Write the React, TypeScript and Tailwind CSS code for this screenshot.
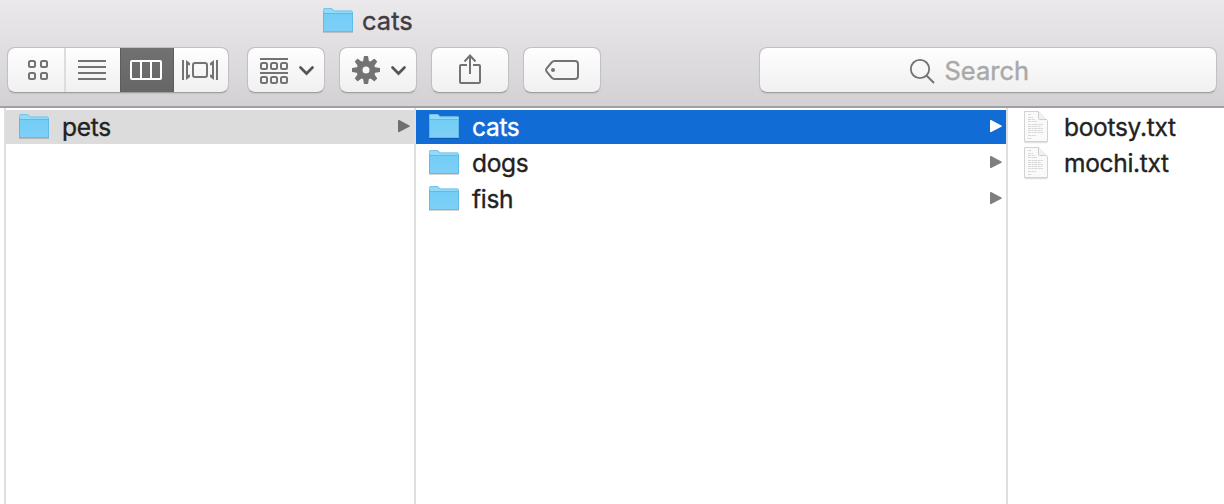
import type { ReactNode } from "react";

const button =
  "h-[46px] shrink-0 overflow-hidden rounded-[8px] border border-[#c2c0c2] border-b-[#a09fa0] bg-linear-to-b from-[#fefefe] to-[#f0f0f0] bg-clip-padding shadow-[0_1px_1px_rgba(0,0,0,0.08)]";

function Folder({ className = "" }: { className?: string }) {
  return (
    <svg className={`h-[28px] w-[32px] shrink-0 ${className}`} viewBox="0 0 32 28">
      <defs>
        <linearGradient id="folder" x1="0" y1="0" x2="0" y2="1">
          <stop offset="0" stopColor="#72cdf6" />
          <stop offset="1" stopColor="#7fd0f7" />
        </linearGradient>
      </defs>
      <path d="M1 26H31V27H1z" fill="#000" opacity=".16" />
      <path d="M1 4Q1 2 2.500 2H9Q10.500 2 11.300 3.500L12 4.500H30Q31 4.500 31 6V26H1z" fill="#93daf8" />
      <path d="M1.500 4Q1.500 2.500 3 2.500H9Q10.200 2.500 11 4L12 5H30" fill="none" stroke="#74c5e9" strokeWidth="1" />
      <path d="M1 7H31V26H1z" fill="url(#folder)" />
      <path d="M1 7.500H31M1 25.500H31M1.500 5V26M30.500 6V26" stroke="#57b6e3" strokeWidth="1" opacity=".75" />
    </svg>
  );
}

function Doc() {
  return (
    <svg className="-mt-[1px] h-[34px] w-[26px] shrink-0" viewBox="0 0 26 34">
      <path d="M1.500 1.500H15L24.500 10.500V32.500H1.500z" fill="#000" opacity=".12" transform="translate(0 .7)" />
      <path d="M1.500 1.500H15.500L24.500 10.500V31.500H1.500z" fill="#fafafa" stroke="#d2d2d2" />
      <path d="M15.500 1.500V8.500Q15.500 9.500 16.500 9.500H24" fill="#f1f1f1" stroke="#cecece" />
      <path
        d="M5 4.500H8M5 7.500H10M5 9.500H12M5 11.500H14M5 14.500H20M5 16.500H18M5 18.500H20M5 20.500H19M5 22.500H20M5 25.500H13M5 28.500H9"
        stroke="#b5b5b5"
        strokeWidth="1"
        strokeDasharray="3 .7 2 .5"
        opacity=".5"
      />
    </svg>
  );
}

function Arrow({ color }: { color: string }) {
  return (
    <svg className="mr-[3px] h-[34px] w-[14px] shrink-0" viewBox="0 0 14 34">
      <path d="M1.800 10.800L12 16.100L1.800 21.400z" fill={color} stroke={color} strokeWidth="1.600" strokeLinejoin="round" />
    </svg>
  );
}

const text = "text-[24.5px] leading-[34px] tracking-[-0.3px] [-webkit-text-stroke:0.35px_currentColor]";

function Row({ label, className, arrow }: { label: string; className: string; arrow: string }) {
  return (
    <div className={`flex h-[34px] items-center ${className}`}>
      <Folder className="mb-[2px]" />
      <span className={`ml-[12px] flex-1 ${text}`}>{label}</span>
      <Arrow color={arrow} />
    </div>
  );
}

function FileRow({ label }: { label: string }) {
  return (
    <div className="flex h-[34px] items-center pl-[15px]">
      <Doc />
      <span className={`ml-[15px] ${text}`}>{label}</span>
    </div>
  );
}

function Icon({ box, className, children }: { box: string; className: string; children: ReactNode }) {
  return (
    <svg viewBox={box} className={`h-[44px] shrink-0 ${className}`} fill="none" stroke="#737373" strokeWidth="2">
      {children}
    </svg>
  );
}

const teeth = [0, 45, 90, 135, 180, 225, 270, 315];

export default function App() {
  return (
    <div className="flex h-[504px] w-[1224px] flex-col overflow-hidden bg-white font-['Inter','Liberation_Sans',sans-serif] text-[#222]">
      <header className="flex h-[108px] shrink-0 flex-col border-b-2 border-[#a1a0a1] bg-linear-to-b from-[#ebe9ec] to-[#d3d1d4]">
        <div className="flex h-[47px] items-start pl-[322px] pt-[6px]">
          <Folder />
          <span className="ml-[8px] text-[25.5px] leading-[30px] tracking-[0px] text-[#403c43] [-webkit-text-stroke:0.35px_currentColor]">cats</span>
        </div>
        <div className="flex pl-[7px] pr-[7px]">
          <div className={`${button} flex w-[222px]`}>
            <Icon box="8 48 56 44" className="w-[56px]">
              <rect x="29" y="61" width="6" height="6" rx="1.5" />
              <rect x="41" y="61" width="6" height="6" rx="1.5" />
              <rect x="29" y="73" width="6" height="6" rx="1.5" />
              <rect x="41" y="73" width="6" height="6" rx="1.5" />
            </Icon>
            <Icon box="64 48 56 44" className="w-[56px]">
              <path d="M65 48V92" stroke="#dddddd" />
              <path d="M78 61H106M78 67H106M78 73H106M78 79H106" />
            </Icon>
            <div className="-my-px flex h-[46px] w-[54px] shrink-0 items-center bg-linear-to-b from-[#717171] to-[#666666] shadow-[inset_0_0_0_1px_#5d5d5d]">
              <Icon box="120 48 54 44" className="w-[54px]">
                <rect x="131" y="61" width="30" height="18" rx="1" stroke="#fff" />
                <path d="M141 61V79M151 61V79" stroke="#fff" />
              </Icon>
            </div>
            <Icon box="174 48 54 44" className="w-[54px]">
              <path d="M183 60V80M217 60V80" />
              <rect x="193" y="63" width="14" height="14" rx="2" />
              <path d="M186 60L190 63V65.500L188 65V75L190 74.500V77L186 80zM214 60L210 63V65.500L212 65V75L210 74.500V77L214 80z" fill="#737373" stroke="none" />
            </Icon>
          </div>
          <div className={`${button} ml-[18px] w-[78px]`}>
            <Icon box="248 48 76 44" className="w-[76px]">
              <path d="M260 59H288M260 73H288" />
              {[261, 271, 281].map((x) => (
                <g key={x}>
                  <rect x={x} y="63" width="6" height="6" rx="1.5" />
                  <rect x={x} y="77" width="6" height="6" rx="1.5" />
                </g>
              ))}
              <path d="M300.500 67.500L306.500 73.500L312.500 67.500" stroke="#555" strokeWidth="2.700" strokeLinecap="round" />
            </Icon>
          </div>
          <div className={`${button} ml-[14px] w-[78px]`}>
            <Icon box="340 48 76 44" className="w-[76px]">
              <circle cx="366" cy="70" r="6.500" strokeWidth="6" />
              {teeth.map((a) => (
                <path
                  key={a}
                  d="M363 62L363.900 56.300Q364 56 364.500 56H367.500Q368 56 368.100 56.300L369 62z"
                  fill="#737373"
                  stroke="none"
                  transform={`rotate(${a} 366 70)`}
                />
              ))}
              <path d="M392.500 67.500L398.500 73.500L404.500 67.500" stroke="#555" strokeWidth="2.700" strokeLinecap="round" />
            </Icon>
          </div>
          <div className={`${button} ml-[14px] w-[78px]`}>
            <Icon box="432 48 76 44" className="w-[76px]">
              <path d="M467 65H461Q460 65 460 66V82Q460 83 461 83H479Q480 83 480 82V66Q480 65 479 65H473M470 74V55.500M464.500 61.500L470 55.500L475.500 61.500" />
            </Icon>
          </div>
          <div className={`${button} ml-[14px] w-[78px]`}>
            <Icon box="524 48 76 44" className="w-[76px]">
              <path d="M554.500 61H575Q578 61 578 64V76Q578 79 575 79H554.500Q553 79 551.500 77.500L546.500 71.500Q545.500 70 546.500 68.500L551.500 62.500Q553 61 554.500 61z" />
              <circle cx="553" cy="70" r="2" fill="#737373" stroke="none" />
            </Icon>
          </div>
          <div className={`${button} ml-auto flex w-[458px]`}>
            <Icon box="760 48 184 44" className="w-[184px]">
              <circle cx="920" cy="69" r="9.200" strokeWidth="1.800" />
              <path d="M926.500 75.500L934 83" />
            </Icon>
            <span className="ml-[0.5px] text-[25.5px] leading-[45px] tracking-[0px] text-[#a9a9a9] [-webkit-text-stroke:0.4px_currentColor]">Search</span>
          </div>
        </div>
      </header>
      <main className="flex flex-1">
        <div className="ml-[4px] w-[410px] border-l-2 border-[#dfdfdf] pt-[2px]">
          <Row label="pets" className="bg-[#dcdcdc] pl-[12px]" arrow="#6f6f6f" />
        </div>
        <div className="flex w-[592px] flex-col gap-[2px] border-l-2 border-[#dfdfdf] pt-[2px]">
          <Row label="cats" className="bg-[#116cd6] pl-[12px] text-white" arrow="#fff" />
          <Row label="dogs" className="pl-[12px]" arrow="#7f7f7f" />
          <Row label="fish" className="pl-[12px]" arrow="#7f7f7f" />
        </div>
        <div className="flex flex-1 flex-col gap-[2px] border-l-2 border-[#dfdfdf] pt-[2px]">
          <FileRow label="bootsy.txt" />
          <FileRow label="mochi.txt" />
        </div>
      </main>
    </div>
  );
}
